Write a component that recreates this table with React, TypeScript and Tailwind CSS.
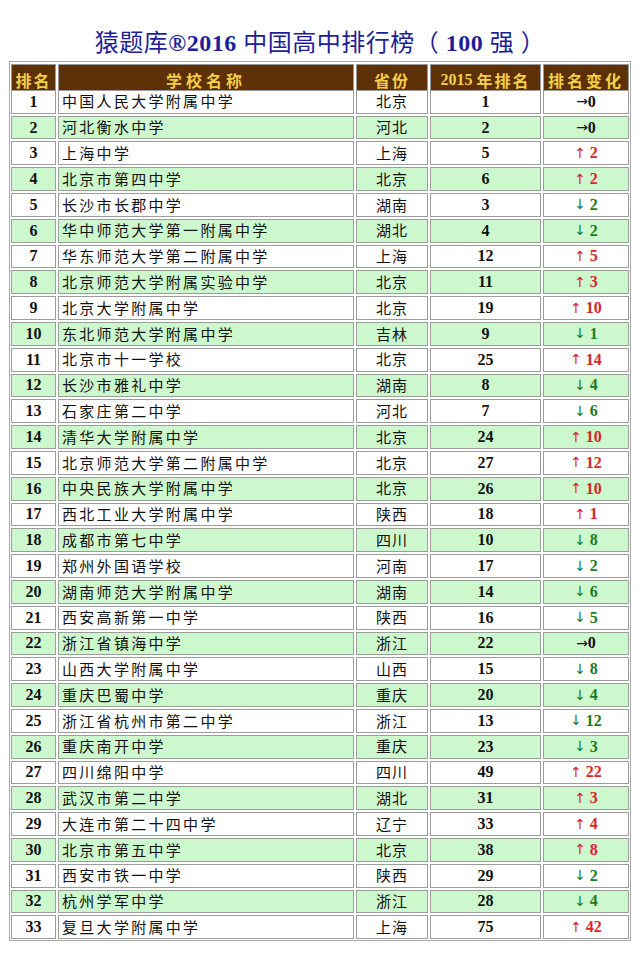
import React from "react";

type Row = [number, string, string, number, string, number];

const rows: Row[] = [
    [1, "中国人民大学附属中学", "北京", 1, "→", 0],
    [2, "河北衡水中学", "河北", 2, "→", 0],
    [3, "上海中学", "上海", 5, "↑", 2],
    [4, "北京市第四中学", "北京", 6, "↑", 2],
    [5, "长沙市长郡中学", "湖南", 3, "↓", 2],
    [6, "华中师范大学第一附属中学", "湖北", 4, "↓", 2],
    [7, "华东师范大学第二附属中学", "上海", 12, "↑", 5],
    [8, "北京师范大学附属实验中学", "北京", 11, "↑", 3],
    [9, "北京大学附属中学", "北京", 19, "↑", 10],
    [10, "东北师范大学附属中学", "吉林", 9, "↓", 1],
    [11, "北京市十一学校", "北京", 25, "↑", 14],
    [12, "长沙市雅礼中学", "湖南", 8, "↓", 4],
    [13, "石家庄第二中学", "河北", 7, "↓", 6],
    [14, "清华大学附属中学", "北京", 24, "↑", 10],
    [15, "北京师范大学第二附属中学", "北京", 27, "↑", 12],
    [16, "中央民族大学附属中学", "北京", 26, "↑", 10],
    [17, "西北工业大学附属中学", "陕西", 18, "↑", 1],
    [18, "成都市第七中学", "四川", 10, "↓", 8],
    [19, "郑州外国语学校", "河南", 17, "↓", 2],
    [20, "湖南师范大学附属中学", "湖南", 14, "↓", 6],
    [21, "西安高新第一中学", "陕西", 16, "↓", 5],
    [22, "浙江省镇海中学", "浙江", 22, "→", 0],
    [23, "山西大学附属中学", "山西", 15, "↓", 8],
    [24, "重庆巴蜀中学", "重庆", 20, "↓", 4],
    [25, "浙江省杭州市第二中学", "浙江", 13, "↓", 12],
    [26, "重庆南开中学", "重庆", 23, "↓", 3],
    [27, "四川绵阳中学", "四川", 49, "↑", 22],
    [28, "武汉市第二中学", "湖北", 31, "↑", 3],
    [29, "大连市第二十四中学", "辽宁", 33, "↑", 4],
    [30, "北京市第五中学", "北京", 38, "↑", 8],
    [31, "西安市铁一中学", "陕西", 29, "↓", 2],
    [32, "杭州学军中学", "浙江", 28, "↓", 4],
    [33, "复旦大学附属中学", "上海", 75, "↑", 42],
];

const cjk = "font-['Noto_Sans_CJK_SC',sans-serif]";
const serif = "font-['Liberation_Serif','Noto_Sans_CJK_SC',serif]";

function HeadCell({ children }: { children: React.ReactNode }) {
    return (
        <div className={`flex items-center justify-center h-[31px] bg-[#5e3006] border border-[#9a9a9a] text-[#f2cf4a] font-bold text-[16px] tracking-[2px] ${cjk}`}>
            {children}
        </div>
    );
}

export default function App() {
    return (
        <div className="w-[640px] h-[974px] bg-white">
            <h1 className="pt-[27px] h-[61px] text-center text-[#1e1f98] text-[24px] leading-[28px] tracking-[0.5px]">
                <span className={cjk}>猿题库</span>
                <span className={`${serif} font-bold`}>®2016 </span>
                <span className={cjk}>中国高中排行榜（</span>
                <span className={`${serif} font-bold`}> 100 </span>
                <span className={cjk}>强</span>
                <span className={serif}> </span>
                <span className={cjk}>）</span>
            </h1>
            <div className="ml-[9px] w-[622px] border border-[#a8a8a8] px-[1px] pt-[2px] pb-[1px]">
                <div className="grid grid-cols-[45px_296px_72px_111px_86px] auto-rows-[23.8px] gap-[2px]">
                    <HeadCell>排名</HeadCell>
                    <HeadCell>
                        <span className="tracking-[4px]">学校名称</span>
                    </HeadCell>
                    <HeadCell>省份</HeadCell>
                    <HeadCell>
                        <span className={`${serif} tracking-[0px]`}>2015&nbsp;</span>
                        <span>年排名</span>
                    </HeadCell>
                    <HeadCell>
                        <span className="tracking-[3px]">排名变化</span>
                    </HeadCell>
                    {rows.map(([rank, name, prov, last, arrow, diff]) => {
                        const green = rank % 2 === 0;
                        const bg = green ? "bg-[#cdf7cc]" : "bg-white";
                        const base = `border border-[#9c9c9c] ${bg} flex items-center`;
                        const changeColor =
                            arrow === "↑" ? "text-[#d8262a]" : arrow === "↓" ? "text-[#1e7a1e]" : "text-[#111]";
                        return (
                            <React.Fragment key={rank}>
                                <div className={`${base} text-[#111] justify-center ${serif} font-bold text-[16px]`}>{rank}</div>
                                <div className={`${base} text-[#111] pl-[3px] ${cjk} text-[15px] tracking-[2.3px]`}>{name}</div>
                                <div className={`${base} text-[#111] justify-center ${cjk} text-[15px] tracking-[1px]`}>{prov}</div>
                                <div className={`${base} text-[#111] justify-center ${serif} font-bold text-[16px]`}>{last}</div>
                                <div className={`${base} justify-center ${changeColor}`}>
                                    <span className="font-['DejaVu_Sans',sans-serif] text-[14px] font-normal">{arrow}</span>
                                    {arrow !== "→" && <span className="w-[4px]" />}
                                    <span className={`${serif} font-bold text-[16px]`}>{diff}</span>
                                </div>
                            </React.Fragment>
                        );
                    })}
                </div>
            </div>
        </div>
    );
}
